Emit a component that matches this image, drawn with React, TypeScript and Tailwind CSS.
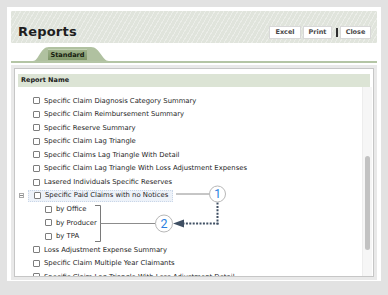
import React from "react";

const topRows = [
  "Specific Claim Diagnosis Category Summary",
  "Specific Claim Reimbursement Summary",
  "Specific Reserve Summary",
  "Specific Claim Lag Triangle",
  "Specific Claims Lag Triangle With Detail",
  "Specific Claim Lag Triangle With Loss Adjustment Expenses",
  "Lasered Individuals Specific Reserves",
];
const childRows = ["by Office", "by Producer", "by TPA"];
const bottomRows = [
  "Loss Adjustment Expense Summary",
  "Specific Claim Multiple Year Claimants",
  "Specific Claim Lag Triangle With Loss Adjustment Detail",
];

function Box() {
  return <span className="inline-block w-[7px] h-[7px] border border-[#7d7d7d] rounded-[1px] bg-white shrink-0" />;
}

function Row({ label, child }: { label: string; child?: boolean }) {
  return (
    <div className={"flex items-center h-[13.55px] shrink-0 " + (child ? "pl-[30px]" : "pl-[18px]")}>
      <Box />
      <span className="ml-[4px] whitespace-nowrap">{label}</span>
    </div>
  );
}

export default function App() {
  return (
    <div className="relative w-[388px] h-[295px] bg-[#e2e2e2] p-[7px] overflow-hidden font-['DejaVu_Sans',sans-serif] text-[#262626]">
      <div className="h-[274px] bg-white px-[4px] pt-[4px] pb-[1px] flex flex-col">
        {/* Header */}
        <div className="h-[32px] shrink-0 flex items-end justify-between pl-[7px] pr-[6px] pb-[4px] bg-[#e0e4dc] bg-[repeating-linear-gradient(120deg,rgba(255,255,255,0.35)_0px,rgba(255,255,255,0.35)_1px,transparent_1px,transparent_4px)]">
          <div className="text-[13px] font-bold leading-none text-[#1e1e1e] tracking-[0.2px] mb-[1px]">Reports</div>
          <div className="flex items-center">
            <button className="w-[32px] h-[13px] bg-white border border-[#d8d8d8] text-[6.5px] font-bold text-[#4a4a4a] leading-none">Excel</button>
            <button className="ml-[2px] w-[29px] h-[13px] bg-white border border-[#d8d8d8] text-[6.5px] font-bold text-[#4a4a4a] leading-none">Print</button>
            <span className="ml-[4px] w-[1.5px] h-[9px] bg-[#2e2e2e]" />
            <button className="ml-[2.5px] w-[31px] h-[13px] bg-white border border-[#d8d8d8] text-[6.5px] font-bold text-[#4a4a4a] leading-none">Close</button>
          </div>
        </div>
        {/* Tabs */}
        <div className="h-[20px] shrink-0 flex items-end border-b-[2px] border-[#b4c5a5]">
          <div className="relative ml-[22px] w-[76px] h-[14px]">
            <svg className="absolute inset-0" width="76" height="14" viewBox="0 0 76 14">
              <path d="M0 14 C6 14 7 0 16 0 H58 C67 0 69 14 76 14 Z" fill="#b0c1a0" />
            </svg>
            <div className="absolute left-[15px] top-[2px] w-[39px] h-[11px] bg-[linear-gradient(#9cb088,#7f9769)] border-t border-[#c3d2b5] flex items-center justify-center text-[6.6px] font-bold text-[#17200f] leading-none">
              Standard
            </div>
          </div>
        </div>
        {/* Panel */}
        <div className="mt-[2px] flex-1 min-h-0 bg-[#e9e9e9] p-[3px] flex">
          <div className="flex-1 border border-[#c6c6c6] bg-white flex flex-col overflow-hidden">
            <div className="px-[3px] pt-[5px] shrink-0">
              <div className="h-[13px] bg-[#dce4d5] flex items-center pl-[3px] text-[6.5px] font-bold text-[#1b1b1b]">Report Name</div>
            </div>
            <div className="flex-1 min-h-0 flex overflow-hidden">
              <div className="flex-1 flex flex-col pt-[7px] text-[6.85px] overflow-hidden">
                {topRows.map((r) => (
                  <Row key={r} label={r} />
                ))}
                <div className="flex items-center h-[13.55px] shrink-0 pl-[4px]">
                  <span className="w-[5px] h-[5px] border border-[#a9a9a9] flex items-center justify-center">
                    <span className="w-[3px] h-[1px] bg-[#8a8a8a]" />
                  </span>
                  <div className="ml-[4px] h-[12px] flex items-center pl-[5px] pr-[4px] bg-[#edf2f9] border border-dotted border-[#c9d6e8]">
                    <Box />
                    <span className="ml-[4px] whitespace-nowrap">Specific Paid Claims with no Notices</span>
                  </div>
                </div>
                {childRows.map((r) => (
                  <Row key={r} label={r} child />
                ))}
                {bottomRows.map((r) => (
                  <Row key={r} label={r} />
                ))}
              </div>
              <div className="w-[10px] mr-[1px] bg-[#f6f6f6] border-l border-[#ededed] pt-[69px]">
                <div className="ml-[2px] w-[5px] h-[94px] rounded-full bg-[#c2c2c2]" />
              </div>
            </div>
          </div>
        </div>
      </div>

      {/* Annotations */}
      <svg className="absolute left-0 top-0 pointer-events-none" width="388" height="295" viewBox="0 0 388 295">
        <line x1="176" y1="194" x2="209" y2="194" stroke="#8c8c8c" strokeWidth="1" />
        <path d="M95 205.5 H100.5 V241.5 H95" fill="none" stroke="#7a7a7a" strokeWidth="1" />
        <line x1="100.5" y1="223.5" x2="155.5" y2="223.5" stroke="#8c8c8c" strokeWidth="1" />
        <line x1="217.5" y1="202.5" x2="217.5" y2="224.5" stroke="#3f4f63" strokeWidth="2" strokeDasharray="2 1.4" />
        <line x1="218.5" y1="223.5" x2="183" y2="223.5" stroke="#3f4f63" strokeWidth="2" strokeDasharray="2 1.4" />
        <polygon points="173,223.5 184,219.5 184,227.5" fill="#3f4f63" />
        <circle cx="217.5" cy="194" r="8" fill="#ffffff" stroke="#b8b8b8" strokeWidth="1" />
        <circle cx="164" cy="223.5" r="8.5" fill="#ffffff" stroke="#b8b8b8" strokeWidth="1" />
        <text x="217.5" y="198.3" textAnchor="middle" fontFamily="Roboto, sans-serif" fontSize="12" fill="#2b7fe0">1</text>
        <text x="164" y="227.8" textAnchor="middle" fontFamily="Roboto, sans-serif" fontSize="12.5" fill="#2b7fe0">2</text>
      </svg>
    </div>
  );
}
